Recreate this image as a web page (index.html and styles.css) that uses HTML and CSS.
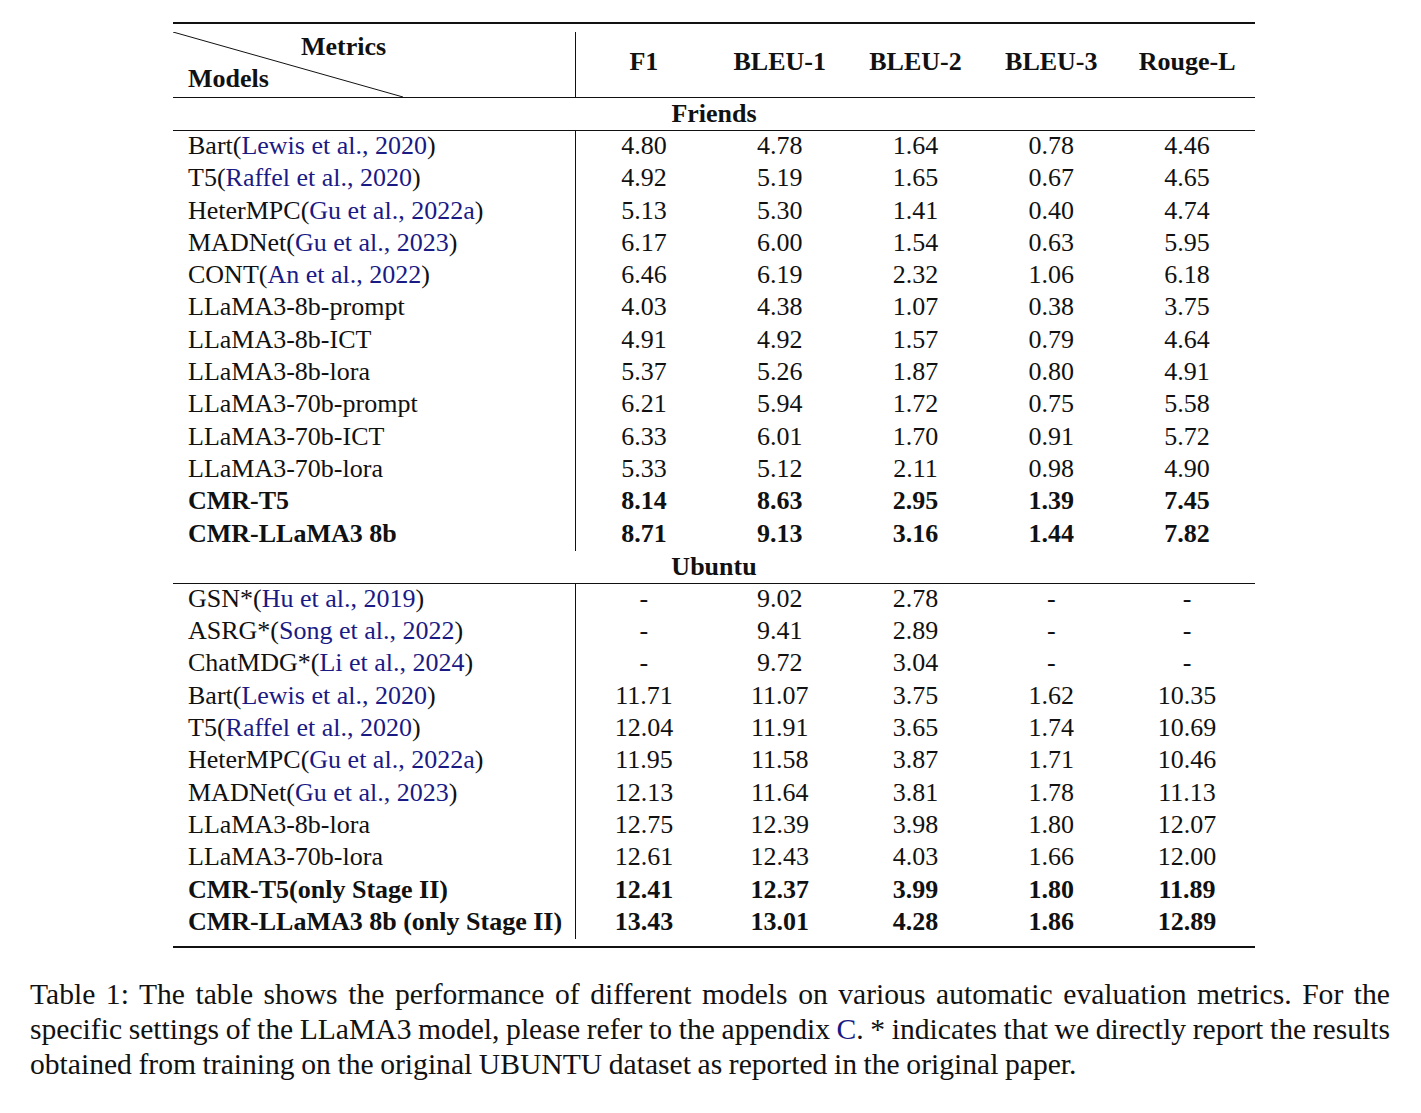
FILE: index.html
```html
<!DOCTYPE html>
<html>
<head>
<meta charset="utf-8">
<link rel="stylesheet" href="styles.css">
</head>
<body>
<div class="page">
  <div class="tbl">
    <div class="head">
      <div class="corner">
        <svg class="diag" width="231" height="65" viewBox="0 0 231 65"><line x1="0" y1="0" x2="230" y2="65" stroke="#111" stroke-width="1"/></svg>
        <span class="metrics">Metrics</span>
        <span class="models">Models</span>
      </div>
      <div class="hc">F1</div>
      <div class="hc">BLEU-1</div>
      <div class="hc">BLEU-2</div>
      <div class="hc">BLEU-3</div>
      <div class="hc">Rouge-L</div>
    </div>
    <div class="section">Friends</div>
    <div class="group">
      <div class="row"><div class="m">Bart(<a>Lewis et al., 2020</a>)</div><div>4.80</div><div>4.78</div><div>1.64</div><div>0.78</div><div>4.46</div></div>
      <div class="row"><div class="m">T5(<a>Raffel et al., 2020</a>)</div><div>4.92</div><div>5.19</div><div>1.65</div><div>0.67</div><div>4.65</div></div>
      <div class="row"><div class="m">HeterMPC(<a>Gu et al., 2022a</a>)</div><div>5.13</div><div>5.30</div><div>1.41</div><div>0.40</div><div>4.74</div></div>
      <div class="row"><div class="m">MADNet(<a>Gu et al., 2023</a>)</div><div>6.17</div><div>6.00</div><div>1.54</div><div>0.63</div><div>5.95</div></div>
      <div class="row"><div class="m">CONT(<a>An et al., 2022</a>)</div><div>6.46</div><div>6.19</div><div>2.32</div><div>1.06</div><div>6.18</div></div>
      <div class="row"><div class="m">LLaMA3-8b-prompt</div><div>4.03</div><div>4.38</div><div>1.07</div><div>0.38</div><div>3.75</div></div>
      <div class="row"><div class="m">LLaMA3-8b-ICT</div><div>4.91</div><div>4.92</div><div>1.57</div><div>0.79</div><div>4.64</div></div>
      <div class="row"><div class="m">LLaMA3-8b-lora</div><div>5.37</div><div>5.26</div><div>1.87</div><div>0.80</div><div>4.91</div></div>
      <div class="row"><div class="m">LLaMA3-70b-prompt</div><div>6.21</div><div>5.94</div><div>1.72</div><div>0.75</div><div>5.58</div></div>
      <div class="row"><div class="m">LLaMA3-70b-ICT</div><div>6.33</div><div>6.01</div><div>1.70</div><div>0.91</div><div>5.72</div></div>
      <div class="row"><div class="m">LLaMA3-70b-lora</div><div>5.33</div><div>5.12</div><div>2.11</div><div>0.98</div><div>4.90</div></div>
      <div class="row bold"><div class="m">CMR-T5</div><div>8.14</div><div>8.63</div><div>2.95</div><div>1.39</div><div>7.45</div></div>
      <div class="row bold"><div class="m">CMR-LLaMA3 8b</div><div>8.71</div><div>9.13</div><div>3.16</div><div>1.44</div><div>7.82</div></div>
    </div>
    <div class="section">Ubuntu</div>
    <div class="group last">
      <div class="row"><div class="m">GSN*(<a>Hu et al., 2019</a>)</div><div>-</div><div>9.02</div><div>2.78</div><div>-</div><div>-</div></div>
      <div class="row"><div class="m">ASRG*(<a>Song et al., 2022</a>)</div><div>-</div><div>9.41</div><div>2.89</div><div>-</div><div>-</div></div>
      <div class="row"><div class="m">ChatMDG*(<a>Li et al., 2024</a>)</div><div>-</div><div>9.72</div><div>3.04</div><div>-</div><div>-</div></div>
      <div class="row"><div class="m">Bart(<a>Lewis et al., 2020</a>)</div><div>11.71</div><div>11.07</div><div>3.75</div><div>1.62</div><div>10.35</div></div>
      <div class="row"><div class="m">T5(<a>Raffel et al., 2020</a>)</div><div>12.04</div><div>11.91</div><div>3.65</div><div>1.74</div><div>10.69</div></div>
      <div class="row"><div class="m">HeterMPC(<a>Gu et al., 2022a</a>)</div><div>11.95</div><div>11.58</div><div>3.87</div><div>1.71</div><div>10.46</div></div>
      <div class="row"><div class="m">MADNet(<a>Gu et al., 2023</a>)</div><div>12.13</div><div>11.64</div><div>3.81</div><div>1.78</div><div>11.13</div></div>
      <div class="row"><div class="m">LLaMA3-8b-lora</div><div>12.75</div><div>12.39</div><div>3.98</div><div>1.80</div><div>12.07</div></div>
      <div class="row"><div class="m">LLaMA3-70b-lora</div><div>12.61</div><div>12.43</div><div>4.03</div><div>1.66</div><div>12.00</div></div>
      <div class="row bold"><div class="m">CMR-T5(only Stage II)</div><div>12.41</div><div>12.37</div><div>3.99</div><div>1.80</div><div>11.89</div></div>
      <div class="row bold"><div class="m">CMR-LLaMA3 8b (only Stage II)</div><div>13.43</div><div>13.01</div><div>4.28</div><div>1.86</div><div>12.89</div></div>
    </div>
  </div>
  <p class="caption">Table 1: The table shows the performance of different models on various automatic evaluation metrics. For the specific settings of the LLaMA3 model, please refer to the appendix <a>C</a>. * indicates that we directly report the results obtained from training on the original UBUNTU dataset as reported in the original paper.</p>
</div>
</body>
</html>
```

FILE: styles.css
```css
html, body {
  margin: 0;
  padding: 0;
  background: #fff;
}
body {
  font-family: "Liberation Serif", "Times New Roman", serif;
  color: #111;
}
.page {
  padding: 22px 0 0 0;
}
.tbl {
  width: 1082px;
  margin-left: 173px;
  border-top: 2px solid #111;
  border-bottom: 2px solid #111;
  font-size: 26px;
}
a {
  color: #1a1a85;
  text-decoration: none;
}
.head {
  display: grid;
  grid-template-columns: 403px repeat(5, 1fr);
  margin-top: 8px;
  border-bottom: 1px solid #111;
  height: 65px;
  font-weight: bold;
}
.corner {
  position: relative;
  border-right: 1px solid #111;
}
.diag {
  position: absolute;
  left: 0;
  top: 0;
}
.metrics {
  position: absolute;
  left: 128px;
  top: 0px;
  line-height: 30px;
}
.models {
  position: absolute;
  left: 15px;
  top: 32px;
  line-height: 30px;
}
.hc {
  display: flex;
  align-items: center;
  justify-content: center;
  padding-bottom: 6px;
}
.section {
  height: 32px;
  line-height: 31px;
  text-align: center;
  font-weight: bold;
  border-bottom: 1px solid #111;
}
.group {
  display: flex;
  flex-direction: column;
}
.group.last {
  padding-bottom: 7px;
}
.row {
  display: grid;
  grid-template-columns: 403px repeat(5, 1fr);
  height: 32.3px;
  line-height: 29.5px;
}
.row > div {
  text-align: center;
}
.row > .m {
  text-align: left;
  padding-left: 15px;
  border-right: 1px solid #111;
  white-space: nowrap;
}
.row.bold {
  font-weight: bold;
}
.caption {
  margin: 29px 31px 0 30px;
  font-size: 29.6px;
  line-height: 35px;
  word-spacing: -0.8px;
  text-align: justify;
}
```
